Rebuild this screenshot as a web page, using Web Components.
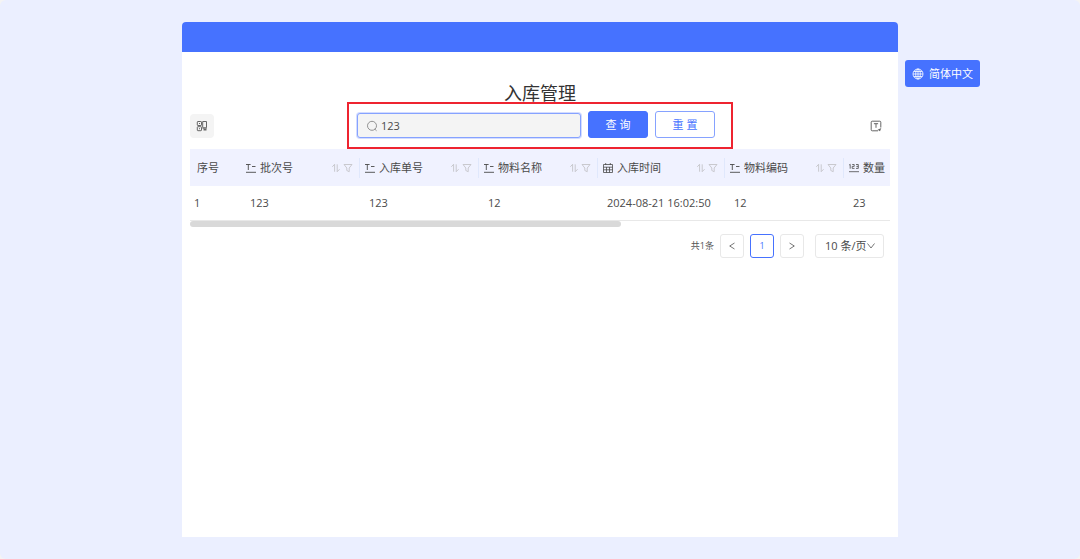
<!DOCTYPE html>
<html lang="zh-CN">
<head>
<meta charset="utf-8">
<meta name="viewport" content="width=device-width, initial-scale=1">
<title>入库管理</title>
<style>
  :root {
    --blue: #4672ff;
    --page: #ebefff;
    --head: #f0f2ff;
    --text: #4a4a4a;
    --line: #e8e8e8;
  }
  body {
    margin: 0;
    background: #f4f4f4;
    color: var(--text);
    font: 11px/16px "Open Sans", "Noto Sans CJK SC", sans-serif;
  }
</style>
</head>
<body>
<app-page>
  <app-panel>
    <h1 slot="title">入库管理</h1>
    <search-toolbar></search-toolbar>
    <data-grid></data-grid>
    <page-nav></page-nav>
  </app-panel>
  <language-button slot="aside">简体中文</language-button>
</app-page>

<script>
const ICONS = {
  globe: ['0 0 12 12', '<g fill="none" stroke="currentColor" stroke-width=".8"><circle cx="6" cy="6" r="5"/><ellipse cx="6" cy="6" rx="2.3" ry="5"/><path d="M6 1v10M1 6h10M1.8 3.5h8.4M1.8 8.5h8.4"/></g>'],
  search: ['0 0 12 12', '<g fill="none" stroke="currentColor" stroke-width=".9"><circle cx="6" cy="5.8" r="4.5"/><path d="M8.7 9 10.6 10.8"/></g>'],
  qr: ['0 0 12 12', '<g fill="none" stroke="currentColor"><rect x="1.3" y="1.5" width="4.2" height="4" rx=".6"/><rect x="1.3" y="6.7" width="4.2" height="4" rx=".6"/><path d="M6.7 7.5v-6h3.8v6M3 3.5h1M3 8.7h1"/><path d="M6.5 8h4.3M7.5 9.8h3" stroke-width="1.5"/></g>'],
  textbox: ['0 0 12 12', '<g fill="none" stroke="currentColor"><path d="M10.8 7.5V2.2a1 1 0 0 0-1-1H2.2a1 1 0 0 0-1 1v7.6a1 1 0 0 0 1 1H8M3.9 3.7h4.2M6 3.7v4.1"/><path fill="currentColor" stroke="none" d="M11.3 8 10 11.2 7.6 9.8z"/></g>'],
  text: ['0 0 12 12', '<path fill="none" stroke="currentColor" stroke-width=".9" d="M1 2.5h4.6M3.3 2.5V8M7 4.5h3.5M1 10.3h10"/>'],
  date: ['0 0 12 12', '<path fill="none" stroke="currentColor" stroke-width=".8" d="M1.5 2.5h9v8h-9zM1.5 5.2h9M1.5 7.8h9M4.5 5v5.5M7.5 5v5.5M3.7 1v2M8.3 1v2"/>'],
  number: ['0 0 12 12', '<g fill="none" stroke="currentColor" stroke-width=".8"><path d="M1.2 3 2.2 2.3v4.4M4.2 2.5h2v1.9h-2v2h2.3M8 2.5h2.3v3.9H8M8.4 4.4h1.8M1 9.7h10"/></g>'],
  sort: ['0 0 10 10', '<path fill="none" stroke="currentColor" stroke-width=".9" d="M1.3 3.8 3.6 1.3v7.4M6.2 1.3v7.4l2.4-2.5"/>'],
  filter: ['0 0 10 10', '<path fill="none" stroke="currentColor" stroke-width=".9" stroke-linejoin="round" d="M1 1.5h8L6.2 5v3.7L3.8 7.5V5z"/>'],
  prev: ['0 0 10 10', '<path fill="none" stroke="currentColor" d="M7.5 2 2.7 5l4.8 3"/>'],
  next: ['0 0 10 10', '<path fill="none" stroke="currentColor" d="M2.5 2 7.3 5 2.5 8"/>'],
  down: ['0 0 10 10', '<path fill="none" stroke="currentColor" d="M1.5 2.5 5 7l3.5-4.5"/>']
};

class UiElement extends HTMLElement {
  constructor() {
    super();
    this.attachShadow({ mode: 'open' });
  }
  connectedCallback() {
    this.shadowRoot.innerHTML =
      `<style>*{box-sizing:border-box}${this.styles()}</style>${this.markup()}`;
  }
}

customElements.define('ui-icon', class extends UiElement {
  styles() {
    return `:host{display:inline-block;flex:none;width:12px;height:12px}
      svg{display:block;width:100%;height:100%}`;
  }
  markup() {
    const [box, body] = ICONS[this.getAttribute('name')];
    return `<svg viewBox="${box}" aria-hidden="true">${body}</svg>`;
  }
});

customElements.define('app-page', class extends UiElement {
  styles() {
    return `:host{display:grid;grid-template-columns:minmax(0,1fr) minmax(0,716px) minmax(90px,1fr);
        box-sizing:border-box;min-height:100vh;padding:22px 0;background:var(--page);border-radius:6px}
      main{grid-column:2;display:grid}
      aside{padding:38px 0 0 7px}`;
  }
  markup() {
    return `<main><slot></slot></main><aside><slot name="aside"></slot></aside>`;
  }
});

customElements.define('app-panel', class extends UiElement {
  styles() {
    return `:host{display:block;background:#fff;border-radius:4px 4px 0 0}
      header{height:30px;background:var(--blue);border-radius:4px 4px 0 0}
      section{padding:28px 8px 8px}
      ::slotted(h1){margin:0 0 5px;font-size:18px;line-height:26px;font-weight:400;text-align:center;color:#333}`;
  }
  markup() {
    return `<header></header><section><slot name="title"></slot><slot></slot></section>`;
  }
});

customElements.define('language-button', class extends UiElement {
  styles() {
    return `:host{display:block}
      button{display:flex;align-items:center;gap:5px;height:27px;padding:0 7px;border:0;border-radius:3px;
        background:var(--blue);color:#fff;font:inherit;white-space:nowrap}`;
  }
  markup() {
    return `<button type="button"><ui-icon name="globe"></ui-icon><slot></slot></button>`;
  }
});

customElements.define('search-toolbar', class extends UiElement {
  styles() {
    return `:host{display:grid;grid-template-columns:1fr auto 1fr;align-items:end;margin-bottom:11px}
      button{font:inherit}
      .tool{display:grid;place-items:center;width:24px;height:24px;padding:0;border:0;border-radius:4px;
        background:#f4f4f4;color:#666}
      .plain{background:none;justify-self:end;margin-right:2px}
      form{position:relative;display:flex;align-items:end;gap:7px;padding-right:8px}
      label{display:flex;align-items:center;gap:3px;width:224px;height:25px;padding:0 8px;
        border:1px solid #86a2ff;border-radius:3px;background:#f4f4f4;box-shadow:0 0 0 1px #d3dcff;color:#888}
      input{flex:1;min-width:0;padding:0;border:0;outline:0;background:none;color:var(--text);font:inherit}
      .action{width:60px;height:27px;padding:0;border:1px solid var(--blue);border-radius:3px;
        background:var(--blue);color:#fff}
      .ghost{background:#fff;border-color:#86a2ff;color:var(--blue)}
      .mark{position:absolute;inset:-9px -10px -11px -10px;border:2px solid #ee2430;pointer-events:none}`;
  }
  markup() {
    return `<button class="tool" type="button" aria-label="扫码"><ui-icon name="qr"></ui-icon></button>
      <form onsubmit="return false">
        <label><ui-icon name="search"></ui-icon><input type="text" value="123" aria-label="搜索"></label>
        <button class="action" type="submit">查 询</button>
        <button class="action ghost" type="button">重 置</button>
        <span class="mark"></span>
      </form>
      <button class="tool plain" type="button" aria-label="文本"><ui-icon name="textbox"></ui-icon></button>`;
  }
});

customElements.define('data-grid', class extends UiElement {
  styles() {
    return `:host{display:block;overflow:hidden;margin-bottom:7px}
      table{width:100%;table-layout:fixed;border-collapse:separate;border-spacing:0}
      th,td{padding:0;font-weight:400;text-align:left;white-space:nowrap}
      th{height:37px;background:var(--head)}
      td{height:35px;padding-left:9px;border-bottom:1px solid var(--line)}
      td:first-child{padding-left:4px}
      .cell{display:flex;align-items:center;height:20px;padding:0 6px 0 4px;border-right:1px solid #e0e8fc}
      .first .cell{padding-left:7px;border:0}
      .last .cell{padding-right:0;border:0}
      .name{flex:1;margin-left:3px}
      .first .name{margin-left:0}
      .tools{display:flex;gap:2px;color:#c4c4c8}
      .tools ui-icon{width:10px;height:10px}
      .index{width:51px}.text{width:119px}.time{width:127px}
      .thumb{width:61.5%;height:6px;border-radius:3px;background:#d9d9d9}`;
  }
  head([label, icon], i, all) {
    const place = i === 0 ? 'first' : i === all.length - 1 ? 'last' : '';
    const tools = place ? '' :
      '<span class="tools"><ui-icon name="sort"></ui-icon><ui-icon name="filter"></ui-icon></span>';
    return `<th scope="col" class="${place}"><div class="cell">${icon ? `<ui-icon name="${icon}"></ui-icon>` : ''}<span class="name">${label}</span>${tools}</div></th>`;
  }
  markup() {
    const columns = [['序号'], ['批次号', 'text'], ['入库单号', 'text'], ['物料名称', 'text'],
      ['入库时间', 'date'], ['物料编码', 'text'], ['数量', 'number']];
    const row = ['1', '123', '123', '12', '2024-08-21 16:02:50', '12', '23'];
    return `<table>
        <colgroup><col class="index"><col class="text"><col class="text"><col class="text"><col class="time"><col class="text"><col></colgroup>
        <thead><tr>${columns.map(this.head).join('')}</tr></thead>
        <tbody><tr>${row.map(v => `<td>${v}</td>`).join('')}</tr></tbody>
      </table>
      <div class="thumb"></div>`;
  }
});

customElements.define('page-nav', class extends UiElement {
  styles() {
    return `:host{display:flex;justify-content:flex-end;align-items:center;gap:6px;padding-right:6px}
      .total{font-size:9px;color:#555}
      button{display:grid;place-items:center;width:24px;height:24px;padding:0;border:1px solid var(--line);
        border-radius:3px;background:#fff;color:#777;font:inherit;font-size:9px}
      button[aria-current]{border-color:var(--blue);color:var(--blue)}
      ui-icon{width:10px;height:10px}
      .size{position:relative;margin-left:5px}
      select{display:block;appearance:none;width:69px;height:24px;padding:0 0 0 9px;border:1px solid var(--line);
        border-radius:3px;background:#fff;color:var(--text);font:inherit}
      .size ui-icon{position:absolute;right:8px;top:7px;color:#777;pointer-events:none}`;
  }
  markup() {
    return `<span class="total">共1条</span>
      <button type="button" aria-label="上一页"><ui-icon name="prev"></ui-icon></button>
      <button type="button" aria-current="page">1</button>
      <button type="button" aria-label="下一页"><ui-icon name="next"></ui-icon></button>
      <span class="size"><select aria-label="每页条数"><option>10 条/页</option></select><ui-icon name="down"></ui-icon></span>`;
  }
});
</script>
</body>
</html>
